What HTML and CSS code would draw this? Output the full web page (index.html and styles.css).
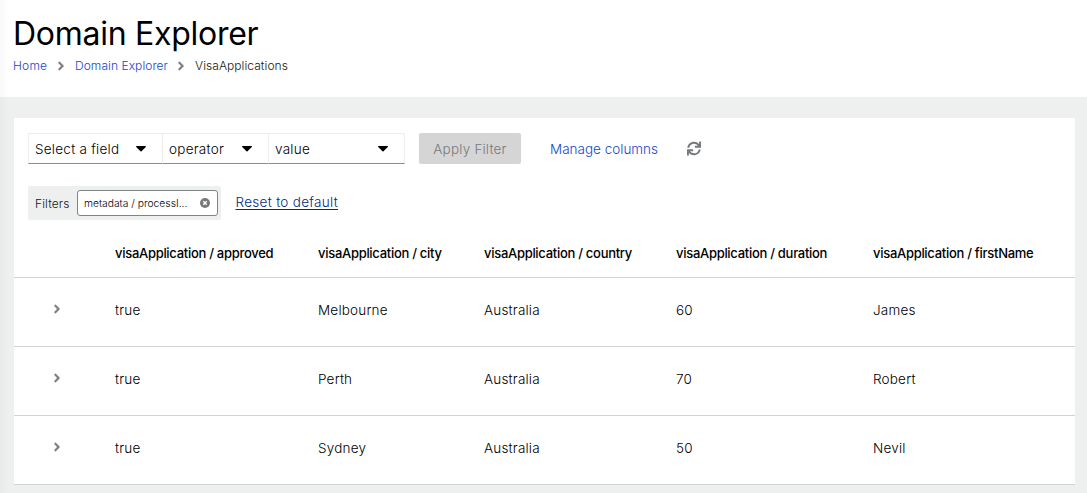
FILE: index.html
```html
<!DOCTYPE html>
<html lang="en">
<head>
<meta charset="utf-8">
<title>Domain Explorer</title>
<link rel="stylesheet" href="styles.css">
</head>
<body>
<svg class="sprite" aria-hidden="true">
  <symbol id="angle" viewBox="0 0 256 512"><path d="M224.3 273l-136 136c-9.4 9.4-24.6 9.4-33.9 0l-22.6-22.6c-9.4-9.4-9.4-24.6 0-33.9l96.4-96.4-96.4-96.4c-9.4-9.4-9.4-24.6 0-33.9L54.3 103c9.4-9.4 24.6-9.4 33.9 0l136 136c9.5 9.4 9.5 24.6.1 34z"/></symbol>
  <symbol id="caret" viewBox="0 0 10 6"><path d="M.6 0h8.8c.5 0 .7.6.4.9L5.500 5.300a.7.7 0 0 1-1 0L.2.900C-.1.600.1 0 .6 0z"/></symbol>
</svg>
<div class="page">
  <header class="header">
    <h1 class="title">Domain Explorer</h1>
    <nav class="crumbs">
      <a class="crumb crumb-home">Home</a>
      <svg class="angle"><use href="#angle"/></svg>
      <a class="crumb crumb-domain">Domain Explorer</a>
      <svg class="angle"><use href="#angle"/></svg>
      <span class="crumb crumb-current">VisaApplications</span>
    </nav>
  </header>
  <main class="card">
    <div class="toolbar">
      <div class="select select-field"><span class="select-text">Select a field</span><svg class="caret"><use href="#caret"/></svg></div>
      <div class="select select-operator"><span class="select-text">operator</span><svg class="caret"><use href="#caret"/></svg></div>
      <div class="select select-value"><span class="select-text">value</span><svg class="caret"><use href="#caret"/></svg></div>
      <button class="apply" disabled><span>Apply Filter</span></button>
      <a class="manage">Manage columns</a>
      <svg class="sync" viewBox="0 0 512 512"><path d="M440.65 12.57l4 82.77A247.16 247.16 0 0 0 255.83 8C134.73 8 33.91 94.92 12.29 209.82A12 12 0 0 0 24.09 224h49.05a12 12 0 0 0 11.67-9.26 175.91 175.91 0 0 1 317-56.94l-101.46-4.86a12 12 0 0 0-12.57 12v47.41a12 12 0 0 0 12 12H500a12 12 0 0 0 12-12V12a12 12 0 0 0-12-12h-47.37a12 12 0 0 0-11.98 12.57zM255.83 432a175.61 175.61 0 0 1-146-77.8l101.8 4.87a12 12 0 0 0 12.57-12v-47.4a12 12 0 0 0-12-12H12a12 12 0 0 0-12 12V500a12 12 0 0 0 12 12h47.35a12 12 0 0 0 12-12.6l-4.15-82.57A247.17 247.17 0 0 0 255.83 504c121.11 0 221.93-86.92 243.55-201.82a12 12 0 0 0-11.8-14.18h-49.05a12 12 0 0 0-11.67 9.26A175.86 175.86 0 0 1 255.83 432z"/></svg>
    </div>
    <div class="filters">
      <div class="chip-group">
        <span class="chip-label">Filters</span>
        <span class="chip"><span class="chip-text">metadata / processI...</span>
          <svg class="clear" viewBox="0 0 10 10"><circle cx="5" cy="5" r="5"/><path d="M3.300 3.300l3.400 3.400M6.700 3.300l-3.400 3.400"/></svg>
        </span>
      </div>
      <a class="reset">Reset to default</a>
    </div>
    <div class="table">
      <div class="row head"><span></span><span>visaApplication / approved</span><span>visaApplication / city</span><span>visaApplication / country</span><span>visaApplication / duration</span><span>visaApplication / firstName</span></div>
      <div class="row"><svg class="angle toggle"><use href="#angle"/></svg><span>true</span><span>Melbourne</span><span>Australia</span><span>60</span><span>James</span></div>
      <div class="row"><svg class="angle toggle"><use href="#angle"/></svg><span>true</span><span>Perth</span><span>Australia</span><span>70</span><span>Robert</span></div>
      <div class="row"><svg class="angle toggle"><use href="#angle"/></svg><span>true</span><span>Sydney</span><span>Australia</span><span>50</span><span>Nevil</span></div>
    </div>
  </main>
</div>
</body>
</html>
```
FILE: styles.css
```css
* { box-sizing: border-box; }
body { margin: 0; font-family: Inter, "Open Sans", sans-serif; font-size: 13.5px; font-weight: 300; color: #000; }
.sprite { position: absolute; width: 0; height: 0; }
.page { height: 493px; overflow: hidden; background: #eef0ef; position: relative; }
.page::after { content: ""; position: absolute; left: 0; top: 0; width: 9px; height: 100%; background: linear-gradient(90deg, rgba(0,0,0,.025), rgba(0,0,0,0)); }
.header { height: 97px; background: #fff; padding: 14px 0 0 13px; }
.title { margin: 0; font-size: 32px; font-weight: 400; line-height: 40px; letter-spacing: -.27px; color: #000; white-space: nowrap; }
.crumbs { display: flex; align-items: center; height: 16px; margin-top: 4px; font-size: 12px; line-height: 16px; letter-spacing: .06px; }
.crumb { color: #1646cc; white-space: nowrap; }
.crumb-home { width: 44px; letter-spacing: .2px; }
.crumb-domain { width: 102px; margin-left: 11px; }
.crumb-current { margin-left: 11px; color: #151515; }
.angle { width: 8px; height: 14px; fill: #808080; flex: none; margin-right: -1px; }
.card { margin: 21px 12px 0 14px; height: 367px; background: #fff; }
.toolbar { display: flex; align-items: center; height: 46px; padding: 15px 0 0 14px; }
.select { display: flex; align-items: center; justify-content: space-between; height: 31px; border: 1px solid #ededed; border-bottom-color: #8a8d90; border-right-width: 0; padding: 0 16px 0 6px; line-height: 20px; }
.select-field { width: 134px; }
.select-operator { width: 106px; }
.select-value { width: 137px; border-right-width: 1px; }
.select-text { letter-spacing: .25px; }
.caret { width: 10px; height: 6px; fill: #000; flex: none; }
.apply { width: 102px; height: 31px; margin-left: 14px; padding: 0; border: 0; border-radius: 2px; background: #d5d5d5; color: #77797c; font: inherit; letter-spacing: .2px; white-space: nowrap; }
.manage { width: 108px; margin-left: 29px; color: #1646cc; white-space: nowrap; }
.sync { width: 14px; height: 15px; margin-left: 29px; fill: #76797b; }
.filters { display: flex; align-items: center; height: 34px; margin: 22px 0 0 14px; }
.chip-group { display: flex; align-items: center; width: 193px; height: 34px; padding-left: 7px; background: #eef0ef; border-radius: 2px; }
.chip-label { width: 42px; font-size: 12px; letter-spacing: .1px; color: #151515; }
.chip { display: flex; align-items: center; justify-content: space-between; width: 141px; height: 26px; padding: 0 7px 0 6px; background: #fff; border: 1px solid #808386; border-radius: 3px; font-size: 10.3px; }
.clear { width: 10px; height: 10px; fill: #76797b; stroke: #fff; stroke-width: 1.500; }
.clear circle { stroke: none; }
.reset { margin-left: 14.5px; padding-bottom: 2px; letter-spacing: .3px; color: #002b80; text-decoration: underline; text-underline-offset: 2px; white-space: nowrap; }
.row { display: grid; grid-template-columns: 101px 203px 166px 192px 197px 1fr; align-items: center; height: 69px; border-bottom: 1px solid #d2d2d2; padding-bottom: 4px; letter-spacing: .2px; white-space: nowrap; }
.head { height: 58px; padding-top: 12px; font-size: 13px; font-weight: 500; letter-spacing: -.29px; color: #000; }
.toggle { margin: 0 0 2px 39px; }
```
